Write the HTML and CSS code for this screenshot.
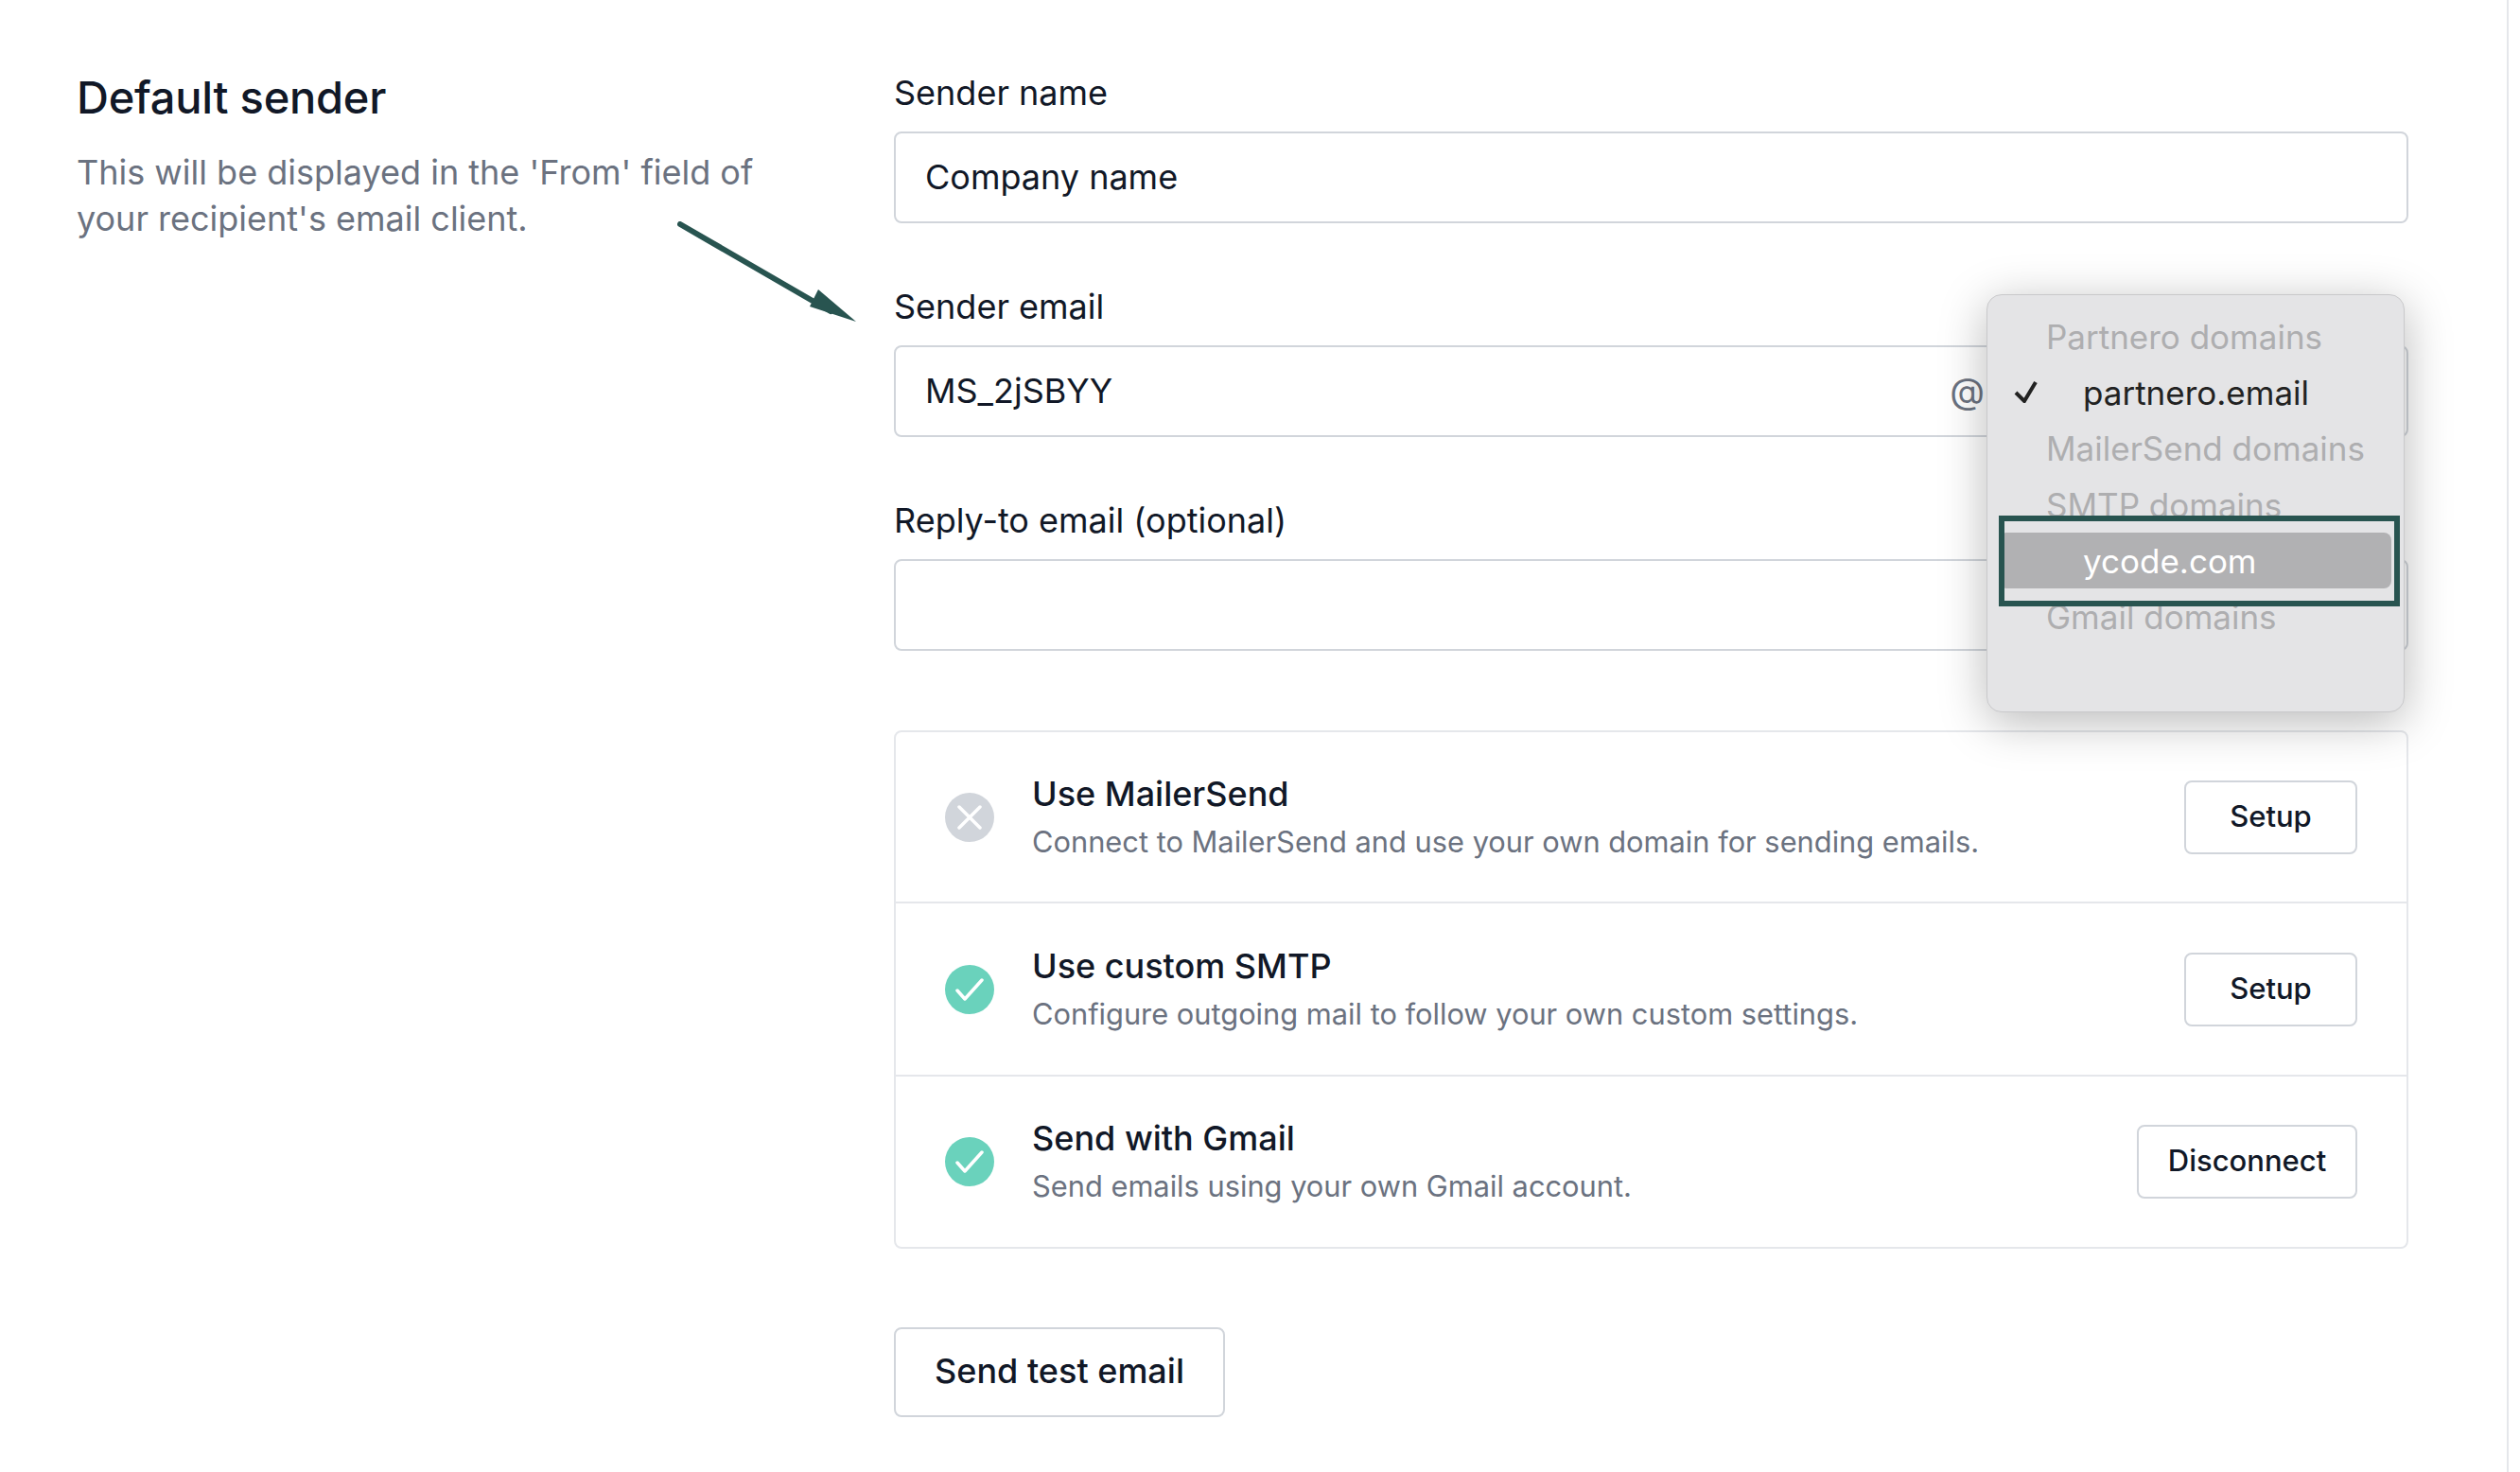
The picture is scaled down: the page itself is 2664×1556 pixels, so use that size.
FILE: index.html
```html
<!DOCTYPE html>
<html lang="en">
  <head>
    <meta charset="UTF-8" />
    <title>Default sender</title>
    <link rel="stylesheet" href="styles.css">
  </head>
  <body>
    <div class="page">
      <div class="intro">
        <h2>Default sender</h2>
        <p>This will be displayed in the 'From' field of your recipient's email client.</p>
      </div>

      <div class="form">
        <div class="field">
          <label>Sender name</label>
          <div class="input">Company name</div>
        </div>
        <div class="field">
          <label>Sender email</label>
          <div class="input">MS_2jSBYY<span class="at">@</span></div>
        </div>
        <div class="field">
          <label>Reply-to email (optional)</label>
          <div class="input"></div>
        </div>

        <div class="card">
          <div class="row">
            <svg class="status" viewBox="0 0 52 52">
              <circle cx="26" cy="26" r="26" fill="#d1d5db" />
              <path d="M15 15 37 37M37 15 15 37" stroke="#fff" stroke-width="3.5" stroke-linecap="round" fill="none" />
            </svg>
            <div class="row-text">
              <div class="row-title">Use MailerSend</div>
              <div class="row-sub">Connect to MailerSend and use your own domain for sending emails.</div>
            </div>
            <button class="btn small">Setup</button>
          </div>
          <div class="row">
            <svg class="status" viewBox="0 0 52 52">
              <circle cx="26" cy="26" r="26" fill="#6ad2bc" />
              <path d="M13 27 21 36 39 16" stroke="#fff" stroke-width="3.5" stroke-linecap="round" stroke-linejoin="round" fill="none" />
            </svg>
            <div class="row-text">
              <div class="row-title">Use custom SMTP</div>
              <div class="row-sub">Configure outgoing mail to follow your own custom settings.</div>
            </div>
            <button class="btn small">Setup</button>
          </div>
          <div class="row">
            <svg class="status" viewBox="0 0 52 52">
              <circle cx="26" cy="26" r="26" fill="#6ad2bc" />
              <path d="M13 27 21 36 39 16" stroke="#fff" stroke-width="3.5" stroke-linecap="round" stroke-linejoin="round" fill="none" />
            </svg>
            <div class="row-text">
              <div class="row-title">Send with Gmail</div>
              <div class="row-sub">Send emails using your own Gmail account.</div>
            </div>
            <button class="btn small wide">Disconnect</button>
          </div>
        </div>

        <button class="btn test">Send test email</button>
      </div>

      <!-- Domain dropdown, open over the fields -->
      <div class="menu">
        <div class="menu-group">Partnero domains</div>
        <div class="menu-item">
          <svg class="tick" viewBox="0 0 26 24">
            <path d="M3 13 12 22 24 2" stroke="#222" stroke-width="4" fill="none" />
          </svg>
          partnero.email
        </div>
        <div class="menu-group">MailerSend domains</div>
        <div class="menu-group">SMTP domains</div>
        <div class="menu-item active">ycode.com</div>
        <div class="menu-group">Gmail domains</div>
      </div>
      <div class="callout"></div>

      <svg class="arrow" viewBox="0 0 200 120">
        <path d="M3 3 162 95" stroke="#285450" stroke-width="6" stroke-linecap="round" fill="none" />
        <path d="M189 106 140 90 149 72Z" fill="#285450" />
      </svg>
    </div>
  </body>
</html>
```

FILE: styles.css
```css
* {
  box-sizing: border-box;
}
body {
  margin: 0;
  background-color: #ffffff;
  color: #111827;
  font-family: Inter, "Liberation Sans", sans-serif;
}
.page {
  position: relative;
  display: flex;
  width: 2652px;
  height: 1556px;
  padding: 74px 0 0 81px;
  border-right: 2px solid #e5e7eb;
}
.intro {
  width: 864px;
  flex-shrink: 0;
}
.intro h2 {
  margin: 0;
  font-size: 47px;
  line-height: 58px;
  font-weight: 500;
  letter-spacing: -0.25px;
}
.intro p {
  width: 740px;
  margin: 26px 0 0;
  font-size: 36px;
  line-height: 49px;
  color: #6b7280;
}
.form {
  width: 1601px;
}
.field {
  margin-bottom: 64px;
}
.field label {
  display: block;
  margin-bottom: 17px;
  font-size: 36px;
  line-height: 48px;
  font-weight: 400;
}
.input {
  display: flex;
  justify-content: space-between;
  align-items: center;
  height: 97px;
  padding: 0 32px 2px 31px;
  border: 2px solid #d1d5db;
  border-radius: 8px;
  font-size: 36px;
}
.at {
  margin-right: 414px;
  color: #6b7280;
  font-size: 38px;
}
.card {
  margin-top: 84px;
  border: 2px solid #e5e7eb;
  border-radius: 8px;
}
.row {
  display: flex;
  align-items: center;
  height: 181px;
  padding: 0 52px;
  border-bottom: 2px solid #e5e7eb;
}
.row:nth-child(2) {
  height: 183px;
}
.row:last-child {
  height: 180px;
  border-bottom: 0;
}
.status {
  width: 52px;
  height: 52px;
  flex-shrink: 0;
}
.row-text {
  flex: 1;
  margin-left: 40px;
}
.row-title {
  font-size: 36px;
  line-height: 52px;
  font-weight: 500;
}
.row-sub {
  font-size: 30.8px;
  line-height: 50px;
  color: #6b7280;
}
.btn {
  padding: 0 0 3px;
  background-color: #ffffff;
  border: 2px solid #d1d5db;
  border-radius: 8px;
  color: #111827;
  font-family: inherit;
  font-weight: 500;
}
.small {
  width: 183px;
  height: 78px;
  font-size: 31px;
}
.wide {
  width: 233px;
}
.test {
  display: block;
  width: 350px;
  height: 95px;
  margin-top: 83px;
  font-size: 36px;
}
.menu {
  position: absolute;
  top: 311px;
  left: 2100px;
  width: 442px;
  height: 442px;
  padding: 14.5px 0;
  background-color: #e4e4e6;
  border: 1px solid #c9c9cb;
  border-radius: 16px;
  box-shadow: 0 10px 50px rgba(0, 0, 0, 0.28);
  font-size: 35px;
}
.menu-group,
.menu-item {
  display: flex;
  align-items: center;
  height: 59.2px;
  white-space: nowrap;
}
.menu-group {
  padding-left: 62px;
  color: #aeaeb0;
}
.menu-item {
  position: relative;
  padding-left: 101px;
  color: #222222;
}
.menu-item.active {
  margin: 0 13px 0 12px;
  padding-left: 89px;
  background-color: #b1b1b3;
  border-radius: 8px;
  color: #ffffff;
}
.tick {
  position: absolute;
  left: 27px;
  top: 16px;
  width: 26px;
  height: 24px;
}
.callout {
  position: absolute;
  top: 545px;
  left: 2113px;
  width: 424px;
  height: 96px;
  border: 6px solid #285450;
}
.arrow {
  position: absolute;
  top: 234px;
  left: 716px;
  width: 200px;
  height: 120px;
}
```
